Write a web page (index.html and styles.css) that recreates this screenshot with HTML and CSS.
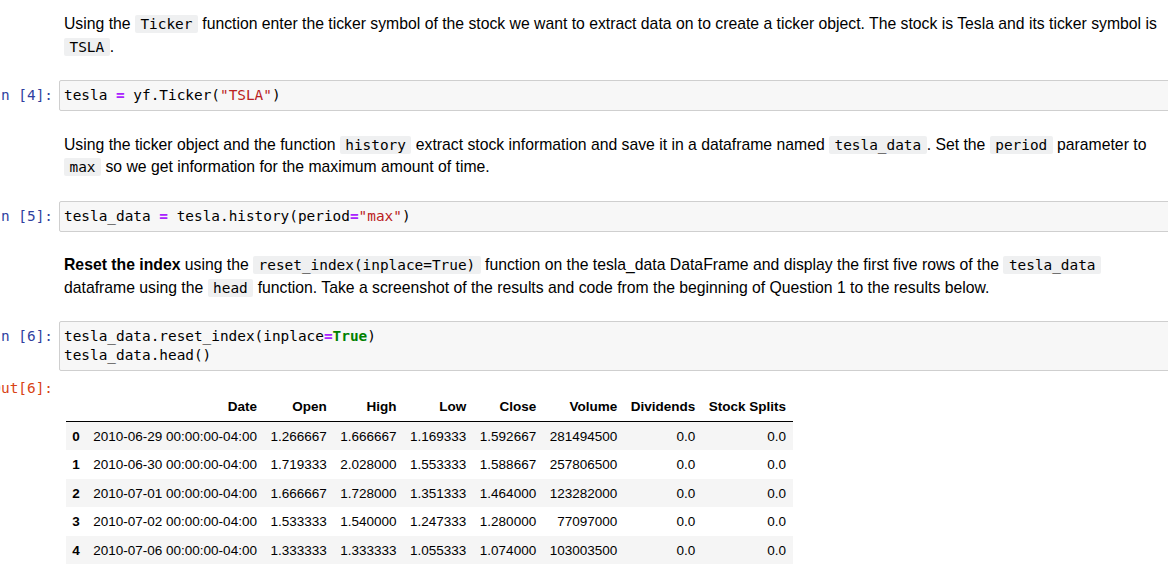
FILE: index.html
```html
<!DOCTYPE html>
<html lang="en">
<head>
<meta charset="utf-8">
<title>Tesla notebook</title>
<link rel="stylesheet" href="styles.css">
</head>
<body>
<div class="notebook">
  <div class="cell">
    <div class="prompt"></div>
    <div class="md">
      <p>Using the <code>Ticker</code> function enter the ticker symbol of the stock we want to extract data on to create a ticker object. The stock is Tesla and its ticker symbol is <code>TSLA</code>.</p>
    </div>
  </div>

  <div class="cell">
    <div class="prompt in">In&nbsp;[4]:</div>
    <div class="input"><pre>tesla <span class="op">=</span> yf.Ticker(<span class="str">"TSLA"</span>)</pre></div>
  </div>

  <div class="cell">
    <div class="prompt"></div>
    <div class="md">
      <p>Using the ticker object and the function <code>history</code> extract stock information and save it in a dataframe named <code>tesla_data</code>. Set the <code>period</code> parameter to <code>max</code> so we get information for the maximum amount of time.</p>
    </div>
  </div>

  <div class="cell">
    <div class="prompt in">In&nbsp;[5]:</div>
    <div class="input"><pre>tesla_data <span class="op">=</span> tesla.history(period<span class="op">=</span><span class="str">"max"</span>)</pre></div>
  </div>

  <div class="cell">
    <div class="prompt"></div>
    <div class="md">
      <p><strong>Reset the index</strong> using the <code>reset_index(inplace=True)</code> function on the tesla_data DataFrame and display the first five rows of the <code>tesla_data</code> dataframe using the <code>head</code> function. Take a screenshot of the results and code from the beginning of Question 1 to the results below.</p>
    </div>
  </div>

  <div class="code-cell">
    <div class="cell">
      <div class="prompt in">In&nbsp;[6]:</div>
      <div class="input"><pre>tesla_data.reset_index(inplace<span class="op">=</span><span class="kw">True</span>)
tesla_data.head()</pre></div>
    </div>
    <div class="cell output">
      <div class="prompt out">Out[6]:</div>
      <div class="out-area">
        <table class="dataframe">
          <thead>
            <tr><th></th><th>Date</th><th>Open</th><th>High</th><th>Low</th><th>Close</th><th>Volume</th><th>Dividends</th><th>Stock Splits</th></tr>
          </thead>
          <tbody>
            <tr><th>0</th><td>2010-06-29 00:00:00-04:00</td><td>1.266667</td><td>1.666667</td><td>1.169333</td><td>1.592667</td><td>281494500</td><td>0.0</td><td>0.0</td></tr>
            <tr><th>1</th><td>2010-06-30 00:00:00-04:00</td><td>1.719333</td><td>2.028000</td><td>1.553333</td><td>1.588667</td><td>257806500</td><td>0.0</td><td>0.0</td></tr>
            <tr><th>2</th><td>2010-07-01 00:00:00-04:00</td><td>1.666667</td><td>1.728000</td><td>1.351333</td><td>1.464000</td><td>123282000</td><td>0.0</td><td>0.0</td></tr>
            <tr><th>3</th><td>2010-07-02 00:00:00-04:00</td><td>1.533333</td><td>1.540000</td><td>1.247333</td><td>1.280000</td><td>77097000</td><td>0.0</td><td>0.0</td></tr>
            <tr><th>4</th><td>2010-07-06 00:00:00-04:00</td><td>1.333333</td><td>1.333333</td><td>1.055333</td><td>1.074000</td><td>103003500</td><td>0.0</td><td>0.0</td></tr>
          </tbody>
        </table>
      </div>
    </div>
  </div>
</div>
</body>
</html>
```

FILE: styles.css
```css
html, body {
  margin: 0;
  padding: 0;
  background: #fff;
  overflow: hidden;
}

body {
  font-family: "Liberation Sans", Arial, sans-serif;
  font-size: 15.75px;
  line-height: 22.5px;
  color: #000;
}

.notebook {
  width: 1180px;
  padding-top: 13px;
  display: flex;
  flex-direction: column;
  gap: 22.25px;
}

.code-cell {
  display: flex;
  flex-direction: column;
}

.cell {
  display: flex;
  align-items: flex-start;
}

.prompt {
  flex: 0 0 59px;
  width: 59px;
  box-sizing: border-box;
  padding-right: 6px;
  padding-top: 6px;
  display: flex;
  justify-content: flex-end;
  overflow: hidden;
  white-space: nowrap;
  font-family: "DejaVu Sans Mono", monospace;
  font-size: 14.4px;
  line-height: 19px;
}

.prompt.in {
  color: #303f9f;
}

.prompt.out {
  color: #d84315;
  padding-top: 8px;
}

.md {
  flex: 1 1 auto;
  padding: 0 15px 0 5px;
}

.md p {
  margin: 0;
}

.md code {
  font-family: "DejaVu Sans Mono", monospace;
  font-size: 14.4px;
  background: #eff0f1;
  padding: 1px 5.5px;
  border-radius: 2px;
}

.input {
  flex: 1 1 auto;
  background: #f7f7f7;
  border: 1px solid #cfcfcf;
  border-radius: 2px;
  padding: 5px 4px;
}

.input pre {
  margin: 0;
  font-family: "DejaVu Sans Mono", monospace;
  font-size: 14.4px;
  line-height: 19px;
  color: #000;
}

.op {
  color: #aa22ff;
  font-weight: bold;
}

.str {
  color: #ba2121;
}

.kw {
  color: #008000;
  font-weight: bold;
}

.out-area {
  padding: 21px 0 0 6.5px;
}

.dataframe {
  border-collapse: collapse;
  border-spacing: 0;
  border: none;
  font-size: 13.5px;
  line-height: normal;
  color: #000;
}

.dataframe th,
.dataframe td {
  padding: 6.75px;
  text-align: right;
  vertical-align: middle;
  white-space: nowrap;
}

.dataframe th {
  font-weight: bold;
}

.dataframe thead {
  border-bottom: 1px solid #000;
}

.dataframe tbody tr:nth-child(odd) {
  background: #f5f5f5;
}
```
